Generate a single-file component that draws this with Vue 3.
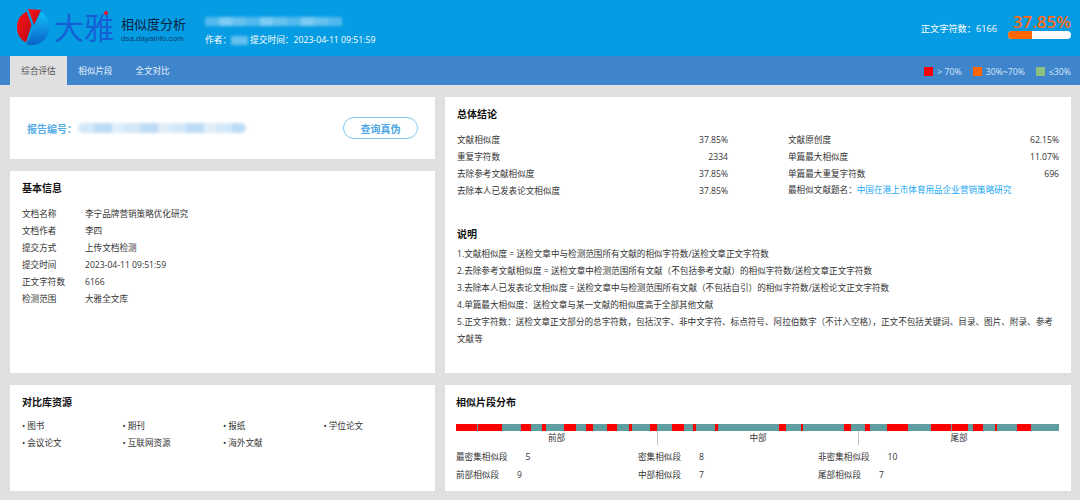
<script setup>
const tabs = ["综合评估", "相似片段", "全文对比"];

const legend = [
  { label: "> 70%", color: "#ff0000" },
  { label: "30%~70%", color: "#ff6600" },
  { label: "≤30%", color: "#8cc07e" },
];

const basicInfo = [
  ["文档名称", "李宁品牌营销策略优化研究"],
  ["文档作者", "李四"],
  ["提交方式", "上传文档检测"],
  ["提交时间", "2023-04-11 09:51:59"],
  ["正文字符数", "6166"],
  ["检测范围", "大雅全文库"],
];

const resources = ["图书", "期刊", "报纸", "学位论文", "会议论文", "互联网资源", "海外文献"];

const summaryLeft = [
  ["文献相似度", "37.85%"],
  ["重复字符数", "2334"],
  ["去除参考文献相似度", "37.85%"],
  ["去除本人已发表论文相似度", "37.85%"],
];

const summaryRight = [
  ["文献原创度", "62.15%"],
  ["单篇最大相似度", "11.07%"],
  ["单篇最大重复字符数", "696"],
];

const notes = [
  "1.文献相似度 = 送检文章中与检测范围所有文献的相似字符数/送检文章正文字符数",
  "2.去除参考文献相似度 = 送检文章中检测范围所有文献（不包括参考文献）的相似字符数/送检文章正文字符数",
  "3.去除本人已发表论文相似度 = 送检文章中与检测范围所有文献（不包括自引）的相似字符数/送检论文正文字符数",
  "4.单篇最大相似度：送检文章与某一文献的相似度高于全部其他文献",
  "5.正文字符数：送检文章正文部分的总字符数，包括汉字、非中文字符、标点符号、阿拉伯数字（不计入空格），正文不包括关键词、目录、图片、附录、参考文献等",
];

// 红色片段在条上的起止位置（条宽 603）
const segments = [
  [0, 21], [22, 46], [65, 75], [86, 90], [108, 120], [130, 137], [151, 161],
  [173, 176], [194, 201], [216, 228], [237, 240], [259, 262], [323, 330],
  [345, 347], [388, 395], [409, 414], [431, 452], [475, 495], [496, 512],
  [517, 527], [539, 541], [561, 575],
];
const barWidth = 603;

const segmentStyle = ([start, end]) => ({
  left: (start / barWidth) * 100 + "%",
  width: ((end - start) / barWidth) * 100 + "%",
});

const stats = [
  ["最密集相似段", "5"],
  ["密集相似段", "8"],
  ["非密集相似段", "10"],
  ["前部相似段", "9"],
  ["中部相似段", "7"],
  ["尾部相似段", "7"],
];
</script>

<template>
  <div class="page">
    <header class="top">
      <div class="logo">
        <svg class="pie" width="38" height="38" viewBox="0 0 38 38">
          <defs>
            <linearGradient id="pieBlue" x1="0" y1="0" x2="0" y2="1">
              <stop offset="0" stop-color="#12c0f8" />
              <stop offset="1" stop-color="#0a62c8" />
            </linearGradient>
            <linearGradient id="pieRed" x1="0" y1="0" x2="1" y2="1">
              <stop offset="0" stop-color="#ff1414" />
              <stop offset="1" stop-color="#b80a18" />
            </linearGradient>
          </defs>
          <path d="M26 4 A18 18 0 0 1 11.5 36.5 L20 17 Z" fill="url(#pieBlue)" />
          <path d="M11.6 3.6 A17.5 17.5 0 0 0 11 34.6 L16.6 17 Z" fill="url(#pieRed)" />
          <path d="M13 1 L26 2 L19 17 Z" fill="url(#pieRed)" />
        </svg>
        <div class="brand">大雅<i class="dot"></i></div>
        <div class="product">
          <div class="product-name">相似度分析</div>
          <div class="product-url">dsa.dayainfo.com</div>
        </div>
      </div>
      <div class="doc">
        <div class="blur doc-title"></div>
        <div class="doc-meta">作者：<span class="blur doc-author"></span>提交时间：2023-04-11 09:51:59</div>
      </div>
      <div class="score">
        <span class="score-count">正文字符数：6166</span>
        <div class="score-box">
          <div class="score-value">37.85%</div>
          <div class="progress"><div class="progress-fill" :style="{ width: '37.85%' }"></div></div>
        </div>
      </div>
    </header>

    <nav class="nav">
      <div class="tabs">
        <a v-for="(tab, i) in tabs" :key="tab" class="tab" :class="{ active: i === 0 }">{{ tab }}</a>
      </div>
      <div class="legend">
        <span v-for="item in legend" :key="item.label" class="legend-item">
          <i class="swatch" :style="{ background: item.color }"></i>{{ item.label }}
        </span>
      </div>
    </nav>

    <main class="content">
      <section class="card report">
        <span class="report-label">报告编号：</span>
        <div class="blur report-no"></div>
        <button class="verify">查询真伪</button>
      </section>

      <section class="card summary">
        <h3>总体结论</h3>
        <div class="summary-cols">
          <div class="summary-col">
            <div v-for="row in summaryLeft" :key="row[0]" class="summary-row">
              <span>{{ row[0] }}</span><span>{{ row[1] }}</span>
            </div>
          </div>
          <div class="summary-col">
            <div v-for="row in summaryRight" :key="row[0]" class="summary-row">
              <span>{{ row[0] }}</span><span>{{ row[1] }}</span>
            </div>
            <div class="summary-row start">
              <span>最相似文献题名：</span><a class="link">中国在港上市体育用品企业营销策略研究</a>
            </div>
          </div>
        </div>
        <h3 class="notes-title">说明</h3>
        <p v-for="note in notes" :key="note" class="note">{{ note }}</p>
      </section>

      <section class="card basic">
        <h3>基本信息</h3>
        <div v-for="row in basicInfo" :key="row[0]" class="info-row">
          <span class="info-label">{{ row[0] }}</span><span>{{ row[1] }}</span>
        </div>
      </section>

      <section class="card sources">
        <h3>对比库资源</h3>
        <ul class="source-list">
          <li v-for="item in resources" :key="item">{{ item }}</li>
        </ul>
      </section>

      <section class="card distribution">
        <h3>相似片段分布</h3>
        <div class="bar">
          <i v-for="seg in segments" :key="seg[0]" class="seg" :style="segmentStyle(seg)"></i>
        </div>
        <div class="parts">
          <span>前部</span>
          <span>中部</span>
          <span>尾部</span>
        </div>
        <div class="stats">
          <div v-for="row in stats" :key="row[0]" class="stat">
            <span>{{ row[0] }}</span><span class="stat-value">{{ row[1] }}</span>
          </div>
        </div>
      </section>
    </main>
  </div>
</template>

<style>
html,
body {
  margin: 0;
  background: #e0e0e0;
}
</style>

<style scoped>
.page {
  width: 1080px;
  height: 500px;
  overflow: hidden;
  background: #e0e0e0;
  color: #333;
  font-family: "Open Sans", "Noto Sans CJK SC", sans-serif;
  font-size: 8.6px;
}

/* 顶部 */
.top {
  height: 56px;
  box-sizing: border-box;
  background: #059ce3;
  color: #fff;
  display: flex;
  align-items: flex-start;
  padding: 8px 9px 0 15px;
}
.logo {
  display: flex;
  align-items: flex-start;
  width: 190px;
}
.pie {
  flex: none;
}
.brand {
  position: relative;
  width: 67px;
  margin-left: 1px;
  font-size: 30px;
  line-height: 40px;
  color: #1660d6;
  white-space: nowrap;
}
.dot {
  position: absolute;
  left: 50px;
  top: 3px;
  width: 4px;
  height: 4px;
  border-radius: 50%;
  background: #e8102a;
}
.product {
  padding-top: 7px;
}
.product-name {
  font-size: 13px;
  line-height: 18px;
  color: #06233f;
}
.product-url {
  font-family: "Liberation Sans", sans-serif;
  font-size: 8px;
  line-height: 11px;
  color: #0b3f70;
}
.doc {
  padding-top: 9px;
}
.blur {
  filter: blur(1.5px);
}
.doc-title {
  width: 137px;
  height: 9px;
  background: repeating-linear-gradient(90deg, #52b9ee 0 14px, #7ccbf2 14px 27px, #66c1f0 27px 41px);
}
.doc-meta {
  display: flex;
  align-items: center;
  margin-top: 8px;
  line-height: 12px;
  white-space: pre;
  font-size: 8.7px;
}
.doc-author {
  width: 17px;
  height: 9px;
  margin: 0 2px 0 0;
  background: #66c1f0;
}
.score {
  margin-left: auto;
  display: flex;
  align-items: flex-start;
}
.score-count {
  margin-top: 15px;
  line-height: 12px;
  font-size: 9.2px;
}
.score-box {
  width: 63px;
  margin-left: 11px;
}
.score-value {
  font-size: 17px;
  font-weight: 600;
  line-height: 16px;
  margin-top: 6px;
  text-align: right;
  color: #ff6a13;
  white-space: nowrap;
}
.progress {
  height: 8px;
  margin-top: 1px;
  border-radius: 4px;
  overflow: hidden;
  background: #fff;
}
.progress-fill {
  height: 100%;
  background: #ff6600;
}

/* 导航 */
.nav {
  height: 29px;
  background: #3f85cc;
  display: flex;
  align-items: stretch;
  justify-content: space-between;
  padding: 0 9px 0 10px;
  color: #e8f2fb;
}
.tabs {
  display: flex;
}
.tab {
  width: 57px;
  padding-top: 1px;
  line-height: 29px;
  text-align: center;
}
.tab.active {
  background: #e0e0e0;
  color: #555;
}
.legend {
  display: flex;
  align-items: center;
  gap: 11px;
  padding-top: 2px;
  font-size: 8.7px;
  color: #d6e6f7;
}
.legend-item {
  display: flex;
  align-items: center;
}
.swatch {
  width: 9px;
  height: 9px;
  margin-right: 4px;
}

/* 内容 */
.content {
  display: grid;
  grid-template-columns: 425px 626px;
  grid-template-rows: 62px 202px 106px;
  gap: 12px 10px;
  padding: 12px 9px 0 10px;
}
.card {
  background: #fff;
  box-sizing: border-box;
}
h3 {
  margin: 0;
  font-size: 10px;
  font-weight: 700;
  line-height: 14px;
  color: #111;
}
.report {
  display: flex;
  align-items: center;
  padding: 0 17px;
}
.report-label {
  font-size: 10px;
  font-weight: 700;
  color: #58ade8;
  white-space: nowrap;
}
.report-no {
  width: 168px;
  height: 10px;
  margin-left: 1px;
  border-radius: 5px;
  background: repeating-linear-gradient(90deg, #d3e8f8 0 16px, #bedcf5 16px 34px, #e0eefa 34px 46px);
}
.verify {
  margin-left: auto;
  width: 75px;
  height: 22px;
  padding: 0;
  border: 1px solid #86c9f3;
  border-radius: 11px;
  background: #fff;
  color: #4da7e4;
  font-family: inherit;
  font-size: 10px;
  font-weight: 700;
}
.summary {
  grid-column: 2;
  grid-row: 1 / 3;
  padding: 10px 12px 0 12px;
}
.summary-cols {
  display: flex;
  gap: 60px;
  margin-top: 11px;
}
.summary-col {
  width: 271px;
}
.summary-row {
  display: flex;
  justify-content: space-between;
  height: 17px;
  line-height: 17px;
}
.summary-row.start {
  justify-content: flex-start;
  line-height: 15px;
}
.link {
  color: #19a7f5;
}
.notes-title {
  margin-top: 27px;
  margin-bottom: 5px;
}
.note {
  margin: 0;
  line-height: 17px;
}
.basic {
  padding: 10px 12px 0;
}
.basic h3 {
  margin-bottom: 11px;
}
.info-row {
  height: 17px;
  line-height: 17px;
  display: flex;
}
.info-label {
  width: 63px;
}
.sources {
  padding: 10px 12px 0;
}
.source-list {
  list-style: none;
  margin: 9px 0 0;
  padding: 0;
  display: grid;
  grid-template-columns: repeat(4, 100.5px);
  grid-auto-rows: 17px;
  line-height: 17px;
}
.source-list li::before {
  content: "•";
  margin-right: 2px;
}
.distribution {
  padding: 10px 12px 0 11px;
}
.bar {
  position: relative;
  width: 603px;
  height: 7px;
  margin-top: 15px;
  background: #5f9ea0;
}
.seg {
  position: absolute;
  top: 0;
  bottom: 0;
  background: #ff0000;
}
.parts {
  display: grid;
  grid-template-columns: 201px 201px 201px;
  height: 12px;
  line-height: 14px;
  text-align: center;
}
.parts span + span {
  border-left: 1px solid #c4c4c4;
}
.stats {
  display: grid;
  grid-template-columns: 182px 180px 1fr;
  grid-auto-rows: 18px;
  margin-top: 5px;
  line-height: 18px;
}
.stat-value {
  margin-left: 18px;
}
</style>
